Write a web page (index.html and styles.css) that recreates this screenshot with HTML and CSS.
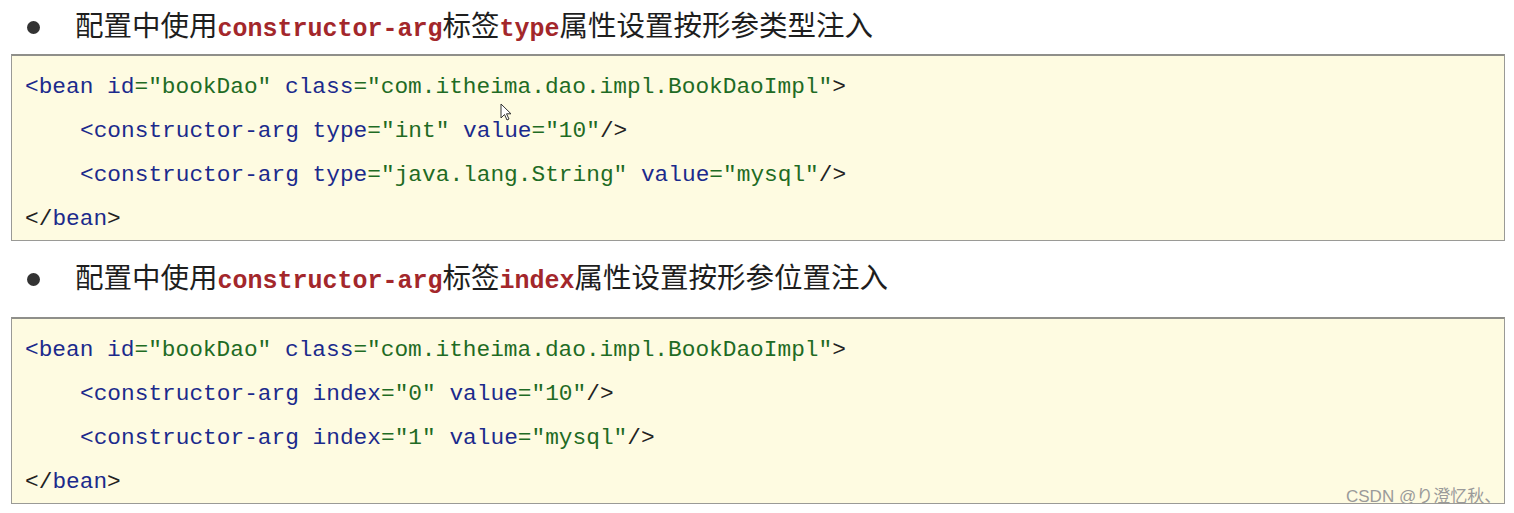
FILE: index.html
```html
<!DOCTYPE html>
<html lang="zh-CN">
<head>
  <meta charset="UTF-8" />
  <meta name="viewport" content="width=device-width, initial-scale=1.0"/>
  <title>constructor-arg</title>
  <link rel="stylesheet" href="styles.css">
</head>
<body>
  <div class="page">
    <div class="point first">
      <span class="dot"></span>
      <span class="point-text">配置中使用<code class="kw">constructor-arg</code>标签<code class="kw">type</code>属性设置按形参类型注入</span>
    </div>
    <div class="code-box">
      <div class="line"><span class="tag">&lt;bean</span> <span class="attr">id</span><span class="val">="bookDao"</span> <span class="attr">class</span><span class="val">="com.itheima.dao.impl.BookDaoImpl"</span><span class="punct">&gt;</span></div>
      <div class="line indent"><span class="tag">&lt;constructor-arg</span> <span class="attr">type</span><span class="val">="int"</span> <span class="attr">value</span><span class="val">="10"</span><span class="punct">/&gt;</span></div>
      <div class="line indent"><span class="tag">&lt;constructor-arg</span> <span class="attr">type</span><span class="val">="java.lang.String"</span> <span class="attr">value</span><span class="val">="mysql"</span><span class="punct">/&gt;</span></div>
      <div class="line"><span class="punct">&lt;/</span><span class="tag">bean</span><span class="punct">&gt;</span></div>
      <svg class="cursor" width="14" height="20" viewBox="0 0 14 20">
        <path d="M1 1 L1 15 L4.5 11.5 L7 17 L9 16 L6.5 10.8 L11 10.8 Z" fill="#fff" stroke="#333" stroke-width="1"/>
      </svg>
    </div>

    <div class="point">
      <span class="dot"></span>
      <span class="point-text">配置中使用<code class="kw">constructor-arg</code>标签<code class="kw">index</code>属性设置按形参位置注入</span>
    </div>
    <div class="code-box">
      <div class="line"><span class="tag">&lt;bean</span> <span class="attr">id</span><span class="val">="bookDao"</span> <span class="attr">class</span><span class="val">="com.itheima.dao.impl.BookDaoImpl"</span><span class="punct">&gt;</span></div>
      <div class="line indent"><span class="tag">&lt;constructor-arg</span> <span class="attr">index</span><span class="val">="0"</span> <span class="attr">value</span><span class="val">="10"</span><span class="punct">/&gt;</span></div>
      <div class="line indent"><span class="tag">&lt;constructor-arg</span> <span class="attr">index</span><span class="val">="1"</span> <span class="attr">value</span><span class="val">="mysql"</span><span class="punct">/&gt;</span></div>
      <div class="line"><span class="punct">&lt;/</span><span class="tag">bean</span><span class="punct">&gt;</span></div>
    </div>
  </div>
  <div class="watermark">CSDN @り澄忆秋、</div>
</body>
</html>
```

FILE: styles.css
```css
body {
  margin: 0;
  padding: 0;
  background: #fff;
  font-family: "Noto Sans CJK SC", "Noto Sans", sans-serif;
  color: #1e1e1e;
}
.page {
  margin: 0 9px 0 11px;
}
.point {
  display: flex;
  align-items: center;
  height: 54px;
  margin-top: 11px;
  margin-bottom: 11px;
}
.point.first {
  margin-top: 0;
  margin-bottom: 0;
}
.dot {
  width: 13px;
  height: 13px;
  border-radius: 50%;
  background: #333;
  margin-left: 16px;
  margin-right: 35px;
  flex-shrink: 0;
}
.point-text {
  font-size: 28.5px;
  line-height: 54px;
  white-space: nowrap;
}
.kw {
  font-family: "Liberation Mono", monospace;
  font-weight: bold;
  font-size: 25px;
  color: #a3272b;
}
.code-box {
  position: relative;
  background: #fefbe1;
  border: 1px solid #9a9a96;
  border-top: 2px solid #8f8f8a;
  padding: 9px 13px 0 13px;
  font-family: "Liberation Mono", monospace;
  font-size: 22.8px;
}
.line {
  height: 44px;
  line-height: 44px;
  white-space: pre;
}
.line:last-of-type {
  height: 43px;
}
.line.indent {
  padding-left: 55px;
}
.tag {
  color: #1b2a8c;
}
.attr {
  color: #1b2a8c;
}
.val {
  color: #1f6b24;
}
.punct {
  color: #222;
}
.cursor {
  position: absolute;
  left: 488px;
  top: 47px;
}
.watermark {
  position: absolute;
  left: 1346px;
  top: 482px;
  font-family: "Liberation Sans", "Noto Sans CJK JP", sans-serif;
  font-size: 17px;
  color: #9a9a9a;
  white-space: nowrap;
}
```
